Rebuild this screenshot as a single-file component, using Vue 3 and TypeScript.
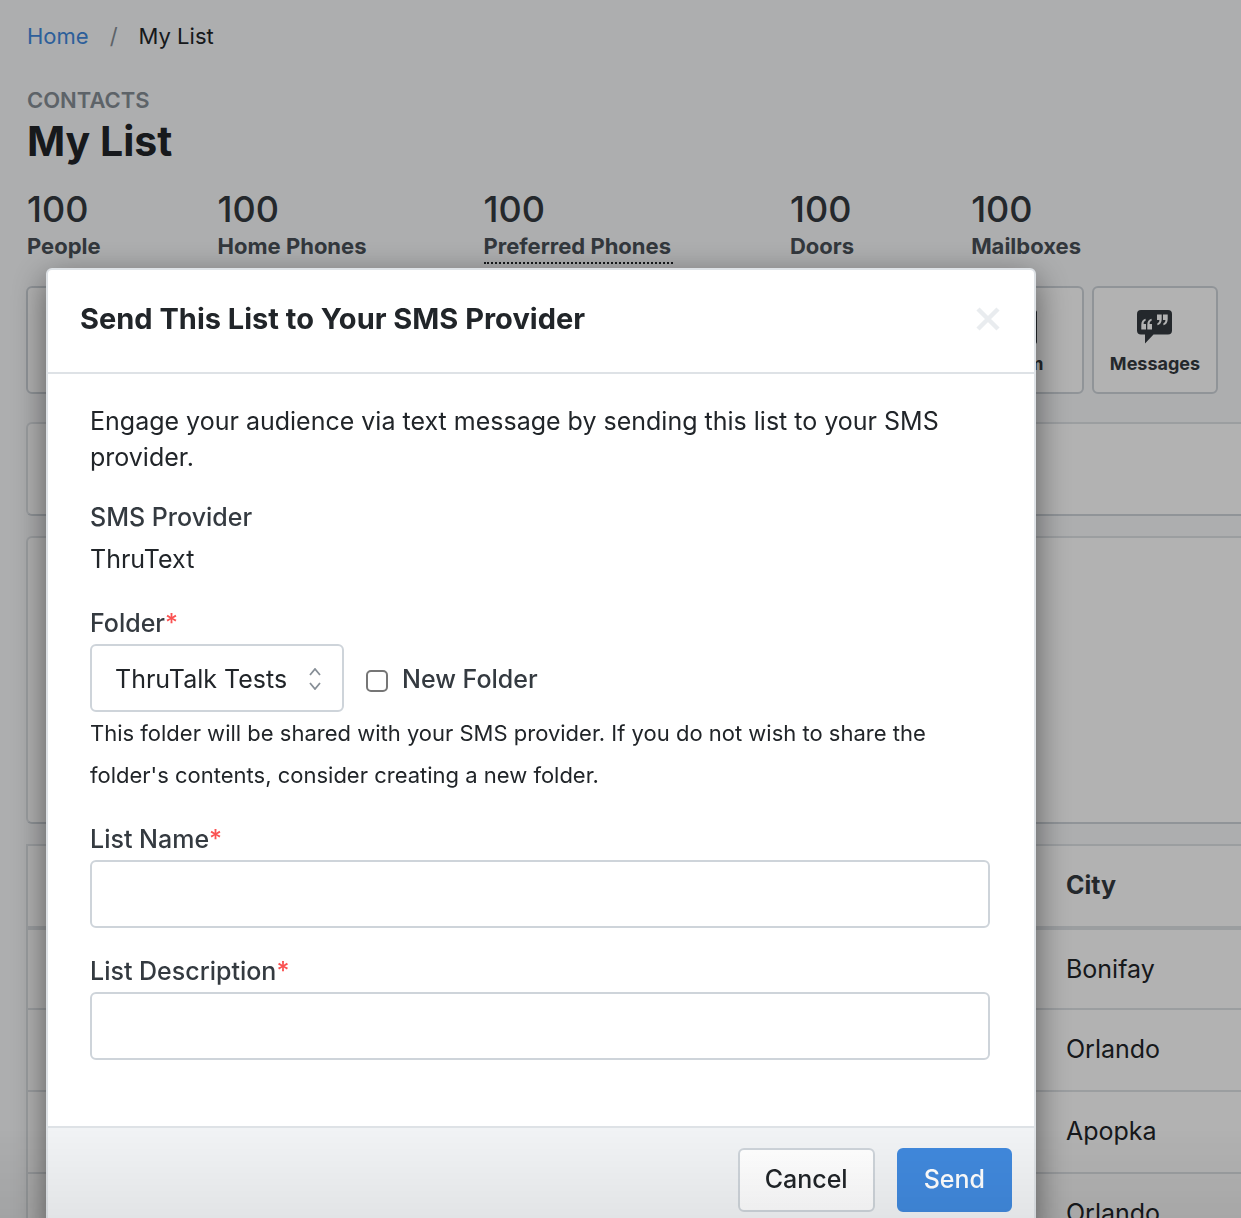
<script setup lang="ts">
import { ref } from 'vue'

interface Stat {
  label: string
  value: number
  hint?: boolean
}

const stats: Stat[] = [
  { label: 'People', value: 100 },
  { label: 'Home Phones', value: 100 },
  { label: 'Preferred Phones', value: 100, hint: true },
  { label: 'Doors', value: 100 },
  { label: 'Mailboxes', value: 100 },
]

const cities: string[] = ['Bonifay', 'Orlando', 'Apopka', 'Orlando']

const folder = ref('ThruTalk Tests')
const newFolder = ref(false)
const listName = ref('')
const listDescription = ref('')
</script>

<template>
  <div class="app">
    <main class="page">
      <div class="intro-block">
        <nav class="crumbs" aria-label="Breadcrumb">
          <a href="#">Home</a>
          <span class="slash">/</span>
          <span>My List</span>
        </nav>

        <p class="kicker">CONTACTS</p>
        <h1>My List</h1>

        <div class="stats">
          <div v-for="s in stats" :key="s.label" class="stat">
            <div class="value">{{ s.value }}</div>
            <div class="label" :class="{ hint: s.hint }">{{ s.label }}</div>
          </div>
        </div>
      </div>

      <div class="tiles">
        <div class="tile wide"></div>
        <button type="button" class="tile">
          <svg width="32" height="34" viewBox="0 0 32 34" aria-hidden="true">
            <rect x="1.5" y="1.5" width="29" height="31" rx="1" fill="none" stroke="currentColor" stroke-width="3" />
            <path d="M8 10h16M8 17h16M8 24h10" stroke="currentColor" stroke-width="3" />
          </svg>
          <span>Form</span>
        </button>
        <button type="button" class="tile">
          <svg width="36" height="34" viewBox="0 0 36 34" aria-hidden="true">
            <path
              d="M4 0h27A4 4 0 0 1 35 4v16.500a4 4 0 0 1-4 4H16.500L8 33.500v-9H4a4 4 0 0 1-4-4V4a4 4 0 0 1 4-4z"
              fill="currentColor"
            />
            <g class="quotes">
              <path d="M20 4.500h4.700v4.500c0 3.500-1.500 5.600-4.300 6.200v-2c1.400-.5 2-1.400 2-3.200h-2.400z" />
              <path d="M26 4.500h4.700v4.500c0 3.500-1.500 5.600-4.300 6.200v-2c1.400-.5 2-1.400 2-3.200h-2.400z" />
              <path d="M9 19.500H4.300v-4.500c0-3.500 1.500-5.600 4.300-6.200v2c-1.400.5-2 1.400-2 3.200h2.400z" />
              <path d="M15 19.500h-4.700v-4.500c0-3.500 1.500-5.600 4.300-6.200v2c-1.400.5-2 1.400-2 3.200h2.400z" />
            </g>
          </svg>
          <span>Messages</span>
        </button>
      </div>

      <section class="panel short"></section>
      <section class="panel tall"></section>

      <table>
        <thead>
          <tr>
            <th></th>
            <th class="city">City</th>
          </tr>
        </thead>
        <tbody>
          <tr v-for="(c, i) in cities" :key="i">
            <td></td>
            <td>{{ c }}</td>
          </tr>
        </tbody>
      </table>
    </main>

    <div class="overlay">
      <form class="modal" role="dialog" aria-labelledby="dialog-title" @submit.prevent>
        <header>
          <h2 id="dialog-title">Send This List to Your SMS Provider</h2>
          <button type="button" class="close" aria-label="Close">
            <svg width="24" height="24" viewBox="0 0 24 24">
              <path d="M2 2l20 20M22 2l-20 20" stroke="currentColor" stroke-width="4.500" />
            </svg>
          </button>
        </header>

        <div class="body">
          <p class="intro">
            Engage your audience via text message by sending this list to your SMS provider.
          </p>

          <div class="field">
            <div class="name">SMS Provider</div>
            <div class="static">ThruText</div>
          </div>

          <div class="field">
            <label class="name" for="folder">Folder<span class="req">*</span></label>
            <div class="folder-row">
              <div class="select">
                <select id="folder" v-model="folder">
                  <option>ThruTalk Tests</option>
                </select>
                <svg width="12" height="22" viewBox="0 0 12 22" aria-hidden="true">
                  <path d="M1 7l5-6 5 6M1 15l5 6 5-6" fill="none" stroke="currentColor" stroke-width="1.800" />
                </svg>
              </div>
              <label class="check">
                <input v-model="newFolder" type="checkbox" />
                <span>New Folder</span>
              </label>
            </div>
            <p class="help">
              This folder will be shared with your SMS provider. If you do not wish to share the
              folder's contents, consider creating a new folder.
            </p>
          </div>

          <div class="field">
            <label class="name" for="list-name">List Name<span class="req">*</span></label>
            <input id="list-name" v-model="listName" class="text" type="text" />
          </div>

          <div class="field">
            <label class="name" for="list-desc">List Description<span class="req">*</span></label>
            <input id="list-desc" v-model="listDescription" class="text" type="text" />
          </div>
        </div>

        <footer>
          <button type="button" class="btn">Cancel</button>
          <button type="submit" class="btn primary">Send</button>
        </footer>
      </form>
    </div>
    <div class="edge"></div>
  </div>
</template>

<style>
body {
  margin: 0;
  background: #f8f9fb;
}
</style>

<style scoped>
.app {
  height: 100vh;
  overflow: hidden;
  font-family: Inter, "Liberation Sans", sans-serif;
  font-optical-sizing: none;
  font-size: 25px;
  color: #212529;
}
.app * {
  box-sizing: border-box;
}
button,
input,
select {
  font: inherit;
  color: inherit;
}
p,
h1,
h2 {
  margin: 0;
}
.page {
  padding: 22px 0 0 26px;
}
.intro-block {
  padding-left: 1px;
}
.crumbs {
  display: flex;
  gap: 21px;
  font-size: 22px;
  line-height: 28px;
}
.crumbs a {
  color: #4189dd;
  text-decoration: none;
}
.slash {
  color: #868e96;
}
.kicker {
  margin-top: 36px;
  font-size: 22px;
  font-weight: 600;
  line-height: 28px;
  color: #868e96;
}
h1 {
  font-size: 41px;
  font-weight: 700;
  line-height: 54px;
}
.stats {
  display: flex;
  gap: 117px;
  margin-top: 21px;
}
.value {
  font-size: 36px;
  font-weight: 500;
  line-height: 40px;
  color: #343a40;
}
.label {
  margin-top: 1px;
  font-size: 22px;
  font-weight: 700;
  line-height: 32px;
  color: #495057;
  white-space: nowrap;
  border-bottom: 2px solid transparent;
}
.label.hint {
  padding-right: 2px;
  border-bottom: 2px dotted #212529;
}
.tiles {
  display: flex;
  gap: 8px;
  margin: 22px 23px 28px 0;
}
.tile {
  width: 126px;
  height: 108px;
  display: flex;
  flex-direction: column;
  align-items: center;
  gap: 8px;
  padding: 22px 0 0;
  border: 2px solid #ced4da;
  border-radius: 6px;
  background: #fff;
  color: #343a40;
  font-size: 18px;
  font-weight: 700;
  line-height: 24px;
}
.tile.wide {
  flex: 1;
}
.quotes {
  fill: #fff;
}
.panel {
  margin-bottom: 20px;
  border: 2px solid #dee2e6;
  border-right: 0;
  border-bottom-color: #ced4da;
  border-radius: 6px 0 0 6px;
  background: #fff;
}
.short {
  height: 94px;
}
.tall {
  height: 288px;
}
table {
  width: 100%;
  border-collapse: separate;
  border-spacing: 0;
  border: 2px solid #dee2e6;
  border-right: 0;
  background: #fff;
}
th {
  height: 84px;
  padding: 0 16px 2px;
  border-bottom: 4px solid #dee2e6;
  font-weight: 700;
  text-align: left;
  color: #343a40;
}
td {
  height: 82px;
  padding: 0 16px 2px;
  border-bottom: 2px solid #dee2e6;
}
tbody tr:first-child td {
  height: 80px;
  padding-bottom: 0;
}
.city {
  width: 191px;
}
.overlay {
  position: fixed;
  inset: 0;
  padding: 268px 205px 0 46px;
  overflow: hidden;
  background: rgba(0, 0, 0, 0.3);
}
.modal {
  border: 2px solid #dee2e6;
  border-radius: 6px;
  background: #fff;
  box-shadow: 0 10px 34px rgba(0, 0, 0, 0.5);
}
header {
  display: flex;
  align-items: center;
  justify-content: space-between;
  height: 104px;
  padding: 0 34px 4px 32px;
  border-bottom: 2px solid #dee2e6;
}
h2 {
  font-size: 29px;
  font-weight: 700;
  line-height: 36px;
}
.close {
  display: flex;
  padding: 0;
  border: 0;
  background: none;
  color: #e9ecef;
}
.body {
  padding: 29px 44px 66px 42px;
}
.intro {
  margin-bottom: 21px;
  line-height: 36px;
}
.field + .field {
  margin-top: 22px;
}
.name {
  display: block;
  font-weight: 500;
  line-height: 42px;
  color: #343a40;
}
.static {
  line-height: 42px;
}
.req {
  color: #fa5252;
}
.folder-row {
  display: flex;
  gap: 22px;
}
.select {
  position: relative;
}
.select svg {
  position: absolute;
  top: 24px;
  right: 23px;
  color: #868e96;
  pointer-events: none;
}
select {
  appearance: none;
  width: 254px;
  height: 68px;
  padding: 2px 48px 0 23px;
  border: 2px solid #ced4da;
  border-radius: 6px;
  background: #fff;
}
.check {
  display: flex;
  align-items: center;
  gap: 14px;
  padding-top: 2px;
  font-weight: 500;
  color: #343a40;
}
.check input {
  appearance: none;
  width: 22px;
  height: 22px;
  margin: 4px 0 0;
  border: 2px solid #767676;
  border-radius: 5px;
  background: #fff;
}
.help {
  font-size: 22px;
  line-height: 42px;
}
.text {
  display: block;
  width: 100%;
  height: 68px;
  padding: 0 22px;
  border: 2px solid #ced4da;
  border-radius: 6px;
  background: #fff;
}
footer {
  display: flex;
  justify-content: flex-end;
  gap: 22px;
  padding: 20px 22px;
  border-top: 2px solid #dee2e6;
  background: #f1f3f5;
}
.btn {
  height: 64px;
  padding: 0 25px 2px;
  border: 2px solid #ced4da;
  border-radius: 6px;
  background: linear-gradient(#fff, #fcfcfd);
  font-weight: 500;
}
.btn.primary {
  border-color: #4189dd;
  background: #4189dd;
  color: #fff;
}
/* soft darkening along the lower edge of the window */
.edge {
  position: fixed;
  inset: auto 0 0;
  height: 90px;
  background: linear-gradient(transparent, rgba(0, 0, 0, 0.06));
  pointer-events: none;
}
</style>
